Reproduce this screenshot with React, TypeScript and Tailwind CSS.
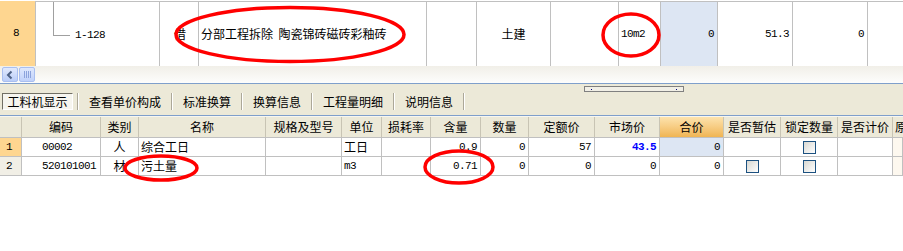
import type { ReactNode } from "react";

const cjk = "font-['Noto_Sans_CJK_SC','Noto_Sans',sans-serif]";
const mono = "font-['Liberation_Mono','Noto_Sans_CJK_SC',monospace]";

function Check() {
  return (
    <div className="h-[13px] w-[13px] border border-[#1c5180] bg-gradient-to-br from-[#d8d8d2] to-white" />
  );
}

type Cell = { w?: number; node?: ReactNode; align?: string; bg?: string };

function GridRow({ cells }: { cells: Cell[] }) {
  return (
    <div className="flex h-[19px] border-b border-[#c0c0c0]">
      {cells.map((c, i) => (
        <div
          key={i}
          style={c.w ? { width: c.w } : undefined}
          className={`flex h-full shrink-0 items-center border-r border-[#c0c0c0] ${
            c.w ? "" : "flex-1"
          } ${c.align ?? "justify-start"} ${c.bg ?? ""}`}
        >
          {c.node}
        </div>
      ))}
    </div>
  );
}

const widths = [22, 79, 38, 127, 76, 40, 49, 50, 48, 66, 65, 64, 57, 57, 55];
const headers = [
  "",
  "编码",
  "类别",
  "名称",
  "规格及型号",
  "单位",
  "损耗率",
  "含量",
  "数量",
  "定额价",
  "市场价",
  "合价",
  "是否暂估",
  "锁定数量",
  "是否计价",
  "原",
];

const num = (t: string, extra = "") => (
  <span className={`${mono} pr-[3px] text-[11px] tracking-[-0.6px] ${extra}`}>{t}</span>
);
const zh = (t: string, extra = "") => (
  <span className={`${cjk} text-[12px] ${extra}`}>{t}</span>
);

const R = "justify-end";
const C = "justify-center";

export default function App() {
  const row1: Cell[] = [
    { node: num("1", "pr-0"), align: C, bg: "bg-[#fed690]" },
    { node: num("00002", "pl-[20px]") },
    { node: zh("人"), align: C },
    { node: zh("综合工日", "pl-[2px]") },
    {},
    { node: zh("工日", "pl-[2px]") },
    {},
    { node: num("0.9"), align: R },
    { node: num("0"), align: R },
    { node: num("57"), align: R },
    { node: num("43.5", "font-bold text-[#0000ff]"), align: R },
    { node: num("0"), align: R, bg: "bg-[#dde6f3]" },
    {},
    { node: <Check />, align: C },
    {},
    { bg: "bg-[#fdf8ef]" },
  ];
  const row2: Cell[] = [
    { node: num("2", "pr-0"), align: C, bg: "bg-[#f1efe6]" },
    { node: num("520101001", "pl-[20px]") },
    { node: zh("材"), align: C },
    { node: zh("污土量", "pl-[2px]") },
    {},
    { node: num("m3", "pl-[2px]") },
    {},
    { node: num("0.71"), align: R },
    { node: num("0"), align: R },
    { node: num("0"), align: R },
    { node: num("0"), align: R },
    { node: num("0"), align: R },
    { node: <Check />, align: C },
    { node: <Check />, align: C },
    {},
    { bg: "bg-[#fdf8ef]" },
  ];
  const withW = (r: Cell[]) => r.map((c, i) => ({ ...c, w: widths[i] }));

  const tabs = ["查看单价构成", "标准换算", "换算信息", "工程量明细", "说明信息"];

  return (
    <div className={`relative h-[251px] w-[903px] overflow-hidden bg-white text-black ${cjk}`}>
      {/* upper grid */}
      <div className="pt-px">
        <div className="flex h-[65px]">
          <div className="flex w-[36px] shrink-0 items-center justify-center border-r border-[#c0c0c0] bg-[#fed690]">
            {num("8", "pr-0")}
          </div>
          <div className="flex w-[124px] shrink-0 items-start border-r border-t border-[#c0c0c0]">
            <div className="ml-[17px] h-[34px] w-[17px] border-b border-l border-[#a0a0a0]" />
            <span className={`${mono} ml-[5px] self-center pt-[3px] text-[11px] tracking-[-0.6px]`}>1-128</span>
          </div>
          <div className="flex w-[39px] shrink-0 items-center border-r border-t border-[#c0c0c0] pl-[14px]">
            {zh("借")}
          </div>
          <div className="flex w-[228px] shrink-0 items-center border-r border-t border-[#c0c0c0] pl-[2px]">
            {zh("分部工程拆除\u00a0\u00a0陶瓷锦砖磁砖彩釉砖")}
          </div>
          <div className="w-[50px] shrink-0 border-r border-t border-[#c0c0c0]" />
          <div className="flex w-[74px] shrink-0 items-center justify-center border-r border-t border-[#c0c0c0]">
            {zh("土建")}
          </div>
          <div className="w-[68px] shrink-0 border-r border-t border-[#c0c0c0]" />
          <div className="flex w-[42px] shrink-0 items-center border-r border-t border-[#c0c0c0] pl-[2px]">
            {num("10m2")}
          </div>
          <div className="flex w-[57px] shrink-0 items-center justify-end border-r border-t border-[#c0c0c0] bg-[#dde6f3]">
            {num("0")}
          </div>
          <div className="flex w-[75px] shrink-0 items-center justify-end border-r border-t border-[#c0c0c0]">
            {num("51.3")}
          </div>
          <div className="flex w-[75px] shrink-0 items-center justify-end border-r border-t border-[#c0c0c0]">
            {num("0")}
          </div>
          <div className="flex-1 border-t border-[#c0c0c0]" />
        </div>
      </div>

      {/* horizontal scrollbar */}
      <div className="flex h-[17px] items-start gap-px bg-gradient-to-b from-[#f1efe8] to-[#fdfdfc] pl-[2px] pt-px">
        <div className="flex h-[15px] w-[16px] items-center justify-center rounded-[2px] border border-[#a9bff0] bg-gradient-to-b from-[#e2eafd] to-[#bacdf8]">
          <svg width="10" height="10" viewBox="0 0 10 10">
            <path d="M6.5 1.5 L3 5 L6.5 8.5" fill="none" stroke="#4d6185" strokeWidth="2" />
          </svg>
        </div>
        <div className="flex h-[15px] w-[16px] items-center justify-center gap-px rounded-[2px] border border-[#a9bff0] bg-gradient-to-b from-[#dfe8fd] to-[#c0d1fa]">
          <div className="h-[7px] w-px bg-[#8ca3dc]" />
          <div className="h-[7px] w-px bg-[#8ca3dc]" />
          <div className="h-[7px] w-px bg-[#8ca3dc]" />
          <div className="h-[7px] w-px bg-[#8ca3dc]" />
        </div>
      </div>
      <div className="h-px bg-[#7f9fcb]" />

      {/* splitter + tabs */}
      <div className="flex h-[31px] flex-col bg-[#ece9d8]">
        <div className="ml-[584px] mt-[2px] flex h-[6px] w-[100px] items-center justify-between border border-[#808080] bg-[#f1efe6] px-[6px]">
          <div className="h-px w-px bg-[#000080]" />
          <div className="h-px w-px bg-[#000080]" />
        </div>
        <div className="mt-px flex h-[17px] items-stretch pl-[2px]">
          <div className="flex w-[71px] items-center justify-center border border-b-white border-l-[#716f64] border-r-white border-t-[#716f64] bg-[#f6f5ef] text-[12px]">
            工料机显示
          </div>
          <div className="ml-[4px] w-[2px] border-l border-r border-l-[#aca899] border-r-white" />
          {tabs.map((t) => (
            <div key={t} className="flex items-stretch">
              <div className="flex items-center px-[10px] text-[12px]">{t}</div>
              <div className="w-[2px] border-l border-r border-l-[#aca899] border-r-white" />
            </div>
          ))}
        </div>
      </div>
      <div className="h-px bg-[#7f9fcb]" />

      {/* lower grid */}
      <div className="flex h-[22px] border-b border-t border-[#c0c0c0] border-t-[#f7f6f0] bg-[#ece9d8]">
        {headers.map((h, i) => (
          <div
            key={i}
            style={widths[i] ? { width: widths[i] } : undefined}
            className={`flex h-full shrink-0 items-center justify-center border-r border-[#c8c4b4] text-[12px] ${
              widths[i] ? "" : "flex-1 justify-start pl-[2px]"
            } ${h === "合价" ? "bg-gradient-to-b from-[#fde3ad] to-[#f0b552]" : ""}`}
          >
            {h}
          </div>
        ))}
      </div>
      <GridRow cells={withW(row1)} />
      <GridRow cells={withW(row2)} />

      {/* red hand-drawn marks */}
      <svg
        className="pointer-events-none absolute left-0 top-0"
        width="903"
        height="251"
        viewBox="0 0 903 251"
      >
        <g fill="none" stroke="#ff0000" strokeWidth="3.5">
          <ellipse cx="290" cy="34.5" rx="114" ry="27" />
          <ellipse cx="631" cy="35" rx="28" ry="21" />
          <ellipse cx="161" cy="168" rx="36" ry="12" />
          <ellipse cx="459" cy="167" rx="34" ry="16" />
        </g>
      </svg>
    </div>
  );
}
